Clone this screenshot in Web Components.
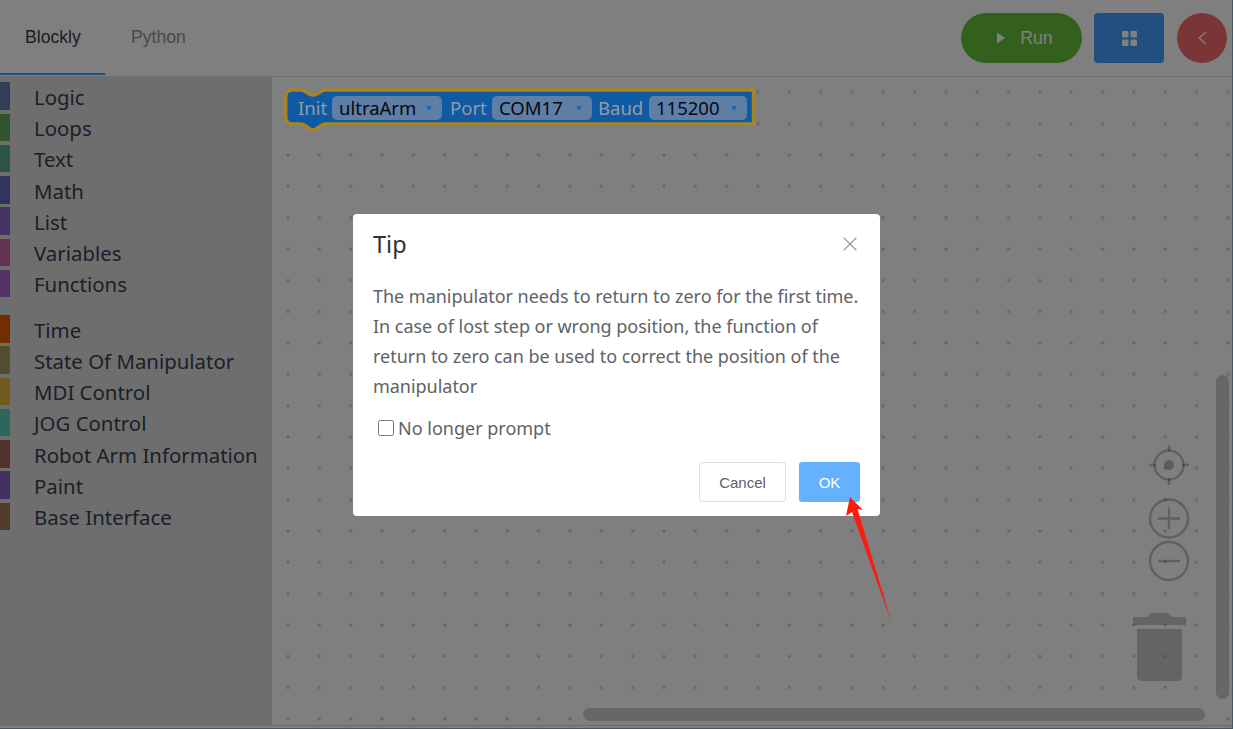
<!DOCTYPE html>
<html>
<head>
<meta charset="utf-8">
<title>Blockly</title>
<style>
  html, body { margin: 0; height: 100%; background: #fff; overflow: hidden; }
</style>
</head>
<body>
<app-shell></app-shell>

<script>
  const uiFont = '"Noto Sans", "Open Sans", sans-serif';
  const armFont = '"Liberation Sans", Arial, sans-serif';

  class ToolItem extends HTMLElement {
    connectedCallback() {
      if (this.shadowRoot) return;
      const shadow = this.attachShadow({ mode: 'open' });
      shadow.innerHTML = `
        <style>
          :host { display: flex; align-items: center; height: 31.25px; }
          .swatch { width: 10px; height: 27.5px; background: var(--c); }
          .label { margin-left: 24px; padding-top: 2px; font: 20.4px/1 ${uiFont}; color: #384050; white-space: nowrap; }
        </style>
        <div class="swatch"></div>
        <div class="label"><slot></slot></div>
      `;
      shadow.querySelector('.swatch').style.setProperty('--c', this.getAttribute('color'));
    }
  }

  class ToolBox extends HTMLElement {
    connectedCallback() {
      if (this.shadowRoot) return;
      const shadow = this.attachShadow({ mode: 'open' });
      const groups = [
        [['Logic', '#5f7fac'], ['Loops', '#5ea85e'], ['Text', '#56a886'], ['Math', '#6269bb'], ['List', '#8c64c7'], ['Variables', '#c764a6'], ['Functions', '#ac62c7']],
        [['Time', '#e65c00'], ['State Of Manipulator', '#a49b5d'], ['MDI Control', '#e0b63e'], ['JOG Control', '#58cfbc'], ['Robot Arm Information', '#a2645d'], ['Paint', '#8660c0'], ['Base Interface', '#9e7956']]
      ];
      shadow.innerHTML = `
        <style>
          :host { display: block; width: 272px; flex: none; background: #ddd; padding-top: 3.4px; box-sizing: border-box; }
          .group + .group { margin-top: 14px; }
        </style>
        ${groups.map((g) => `<div class="group">${g.map(([name, c]) => `<tool-item color="${c}">${name}</tool-item>`).join('')}</div>`).join('')}
      `;
    }
  }

  class AppHeader extends HTMLElement {
    connectedCallback() {
      if (this.shadowRoot) return;
      const shadow = this.attachShadow({ mode: 'open' });
      shadow.innerHTML = `
        <style>
          :host { display: flex; justify-content: space-between; height: 77px; box-sizing: border-box; border-bottom: 1px solid #e4e4e4; background: #fff; font: 17.6px ${armFont}; }
          .tabs { display: flex; }
          .tab { width: 105px; height: 75px; box-sizing: border-box; padding: 27px 0 0 25px; line-height: 20px; color: #909399; }
          .tab.on { color: #3a3b3e; border-bottom: 2px solid #409eff; }
          .tab + .tab { padding-left: 26px; }
          .actions { display: flex; gap: 12px; padding: 13px 6px 0 0; }
          .btn { height: 50px; display: flex; align-items: center; justify-content: center; color: #fff; box-sizing: border-box; }
          .run { width: 121px; border-radius: 25px; background: #67c23a; gap: 15px; padding-left: 7px; }
          .grid { width: 70px; border-radius: 4px; background: #409eff; margin-right: 1px; }
          .back { width: 50px; border-radius: 50%; background: #f56c6c; }
          svg { display: block; }
        </style>
        <div class="tabs">
          <div class="tab on">Blockly</div>
          <div class="tab">Python</div>
        </div>
        <div class="actions">
          <div class="btn run">
            <svg width="8" height="12" viewBox="0 0 8 12"><path d="M0 0.5 L8 6 L0 11.5Z" fill="#fff"/></svg>
            <span>Run</span>
          </div>
          <div class="btn grid">
            <svg width="15" height="15" viewBox="0 0 15 15" fill="#fff">
              <rect width="6.5" height="6.5" rx="1"/><rect x="8.5" width="6.5" height="6.5" rx="1"/>
              <rect y="8.5" width="6.5" height="6.5" rx="1"/><rect x="8.5" y="8.5" width="6.5" height="6.5" rx="1"/>
            </svg>
          </div>
          <div class="btn back">
            <svg width="9" height="14" viewBox="0 0 9 14"><path d="M8 0.7 L1.2 7 L8 13.3" fill="none" stroke="#fff" stroke-width="1.3"/></svg>
          </div>
        </div>
      `;
    }
  }

  class BlockField extends HTMLElement {
    connectedCallback() {
      if (this.shadowRoot) return;
      const shadow = this.attachShadow({ mode: 'open' });
      shadow.innerHTML = `
        <style>
          :host { display: flex; align-items: center; justify-content: space-between; box-sizing: border-box; height: 24px; padding: 0 10px 0 7px; border-radius: 5px; background: #5f7ea6; color: #06080f; width: var(--w); }
          i { width: 0; height: 0; border: 3.5px solid transparent; border-top: 5px solid #1f66ad; border-bottom: 0; }
        </style>
        <span><slot></slot></span><i></i>
      `;
    }
  }

  // sits above the mask: its colours are the dimmed ones already
  class InitBlock extends HTMLElement {
    connectedCallback() {
      if (this.shadowRoot) return;
      const shadow = this.attachShadow({ mode: 'open' });
      shadow.innerHTML = `
        <style>
          :host { position: absolute; z-index: 1; left: 12px; top: 9px; width: 474px; height: 46px; font: 18.5px/24px ${uiFont}; color: #949ba6; }
          svg { position: absolute; left: 0; top: 0; }
          .row { position: absolute; left: 14px; top: 10px; display: flex; align-items: center; white-space: nowrap; }
          .l1 { width: 34px; }
          .l2 { padding-left: 8px; box-sizing: border-box; width: 50px; }
          .l3 { width: 57px; padding-left: 6px; box-sizing: border-box; }
        </style>
        <svg width="474" height="46" viewBox="0 0 474 46">
          <path d="M8.5 4 H17 Q19 4 21 5.5 L26 8.5 Q29 9.5 32 8.5 L37 5.5 Q39 4 41 4 H469.5 V38 H41 Q39 38 37 39.5 L32 43 Q29 44.5 26 43 L21 39.5 Q19 38 17 38 H8.5 Q1.7 38 1.7 31 V11 Q1.7 4 8.5 4Z" fill="#0f5aa3" stroke="#a68524" stroke-width="3.4" stroke-linejoin="round"/>
        </svg>
        <div class="row">
          <span class="l1">Init</span>
          <block-field style="--w:110px">ultraArm</block-field>
          <span class="l2">Port</span>
          <block-field style="--w:100px">COM17</block-field>
          <span class="l3">Baud</span>
          <block-field style="--w:98px">115200</block-field>
        </div>
      `;
    }
  }

  class WorkspaceControls extends HTMLElement {
    connectedCallback() {
      if (this.shadowRoot) return;
      const shadow = this.attachShadow({ mode: 'open' });
      shadow.innerHTML = `
        <style>
          :host { position: absolute; left: 857px; top: 363px; }
          svg { display: block; }
        </style>
        <svg width="80" height="250" viewBox="845 440 80 250" fill="none" stroke="#2e2e2e" stroke-opacity=".3" stroke-width="2.4">
          <circle cx="885" cy="465" r="14.5"/>
          <path d="M885 445 v7 M885 478 v7 M865 465 h7 M898 465 h7"/>
          <circle cx="885" cy="465" r="5" fill="#1e1e1e" fill-opacity=".3" stroke="none"/>
          <circle cx="885" cy="518.5" r="19"/>
          <path d="M885 507.5 v22 M874 518.5 h22"/>
          <circle cx="885" cy="561" r="19"/>
          <path d="M874 561 h22"/>
          <path fill="#1e1e1e" fill-opacity=".24" stroke="none" d="M849 617 H863 Q866 613 869 613 H882 Q885 613 888 617 H902 V625 H849Z"/>
          <path fill="#1e1e1e" fill-opacity=".24" stroke="none" d="M853 629 H898 V676 Q898 681 893 681 H858 Q853 681 853 676Z"/>
        </svg>
      `;
    }
  }

  class BlockCanvas extends HTMLElement {
    connectedCallback() {
      if (this.shadowRoot) return;
      const shadow = this.attachShadow({ mode: 'open' });
      shadow.innerHTML = `
        <style>
          :host {
            display: block; position: relative; flex: 1; overflow: hidden; background-color: #fff;
            background-image: radial-gradient(circle at center, #cbcbcb 0, #cbcbcb 1.2px, transparent 1.9px);
            background-size: 31.33px 31.33px;
            background-position: 0.33px -0.3px;
          }
          .sb { position: absolute; background: #cfcfcf; border-radius: 7px; }
          .v { left: 944px; top: 298px; width: 13px; height: 324px; }
          .h { left: 311px; top: 631px; width: 622px; height: 13px; }
        </style>
        <init-block></init-block>
        <workspace-controls></workspace-controls>
        <div class="sb v"></div>
        <div class="sb h"></div>
      `;
    }
  }

  class TipDialog extends HTMLElement {
    connectedCallback() {
      if (this.shadowRoot) return;
      const shadow = this.attachShadow({ mode: 'open' });
      shadow.innerHTML = `
        <style>
          :host { display: block; width: 527px; height: 302px; box-sizing: border-box; background: #fff; border-radius: 4px; padding: 14px 20px; font-family: ${uiFont}; }
          .head { display: flex; justify-content: space-between; align-items: center; height: 32px; padding-right: 3px; }
          .title { font-size: 23.5px; color: #303133; }
          .body { margin-top: 21px; font-size: 18px; letter-spacing: -0.03px; line-height: 30px; color: #606266; white-space: nowrap; }
          .check { display: flex; align-items: center; margin: 12px 0 0 5px; height: 30px; font-size: 18px; color: #606266; }
          .box { width: 14px; height: 14px; border: 1px solid #767676; border-radius: 2.5px; margin-right: 4px; }
          .foot { display: flex; justify-content: flex-end; gap: 13px; margin-top: 19px; font: 15px ${armFont}; }
          .btn { height: 40px; box-sizing: border-box; border-radius: 3px; display: flex; align-items: center; justify-content: center; }
          .cancel { width: 87px; border: 1px solid #dcdfe6; color: #606266; }
          .ok { width: 61px; background: #66b1ff; color: #fff; }
          svg { display: block; }
        </style>
        <div class="head">
          <div class="title">Tip</div>
          <svg width="14" height="14" viewBox="0 0 14 14"><path d="M0.6 0.6 L13.4 13.4 M13.4 0.6 L0.6 13.4" stroke="#909399" stroke-width="1.3"/></svg>
        </div>
        <div class="body"><slot></slot></div>
        <div class="check"><span class="box"></span><span>No longer prompt</span></div>
        <div class="foot">
          <div class="btn cancel">Cancel</div>
          <div class="btn ok">OK</div>
        </div>
      `;
    }
  }

  class AppShell extends HTMLElement {
    connectedCallback() {
      if (this.shadowRoot) return;
      const shadow = this.attachShadow({ mode: 'open' });
      shadow.innerHTML = `
        <style>
          :host { display: flex; flex-direction: column; position: relative; width: 1233px; height: 729px; overflow: hidden; }
          .main { display: flex; height: 648px; border-bottom: 1px solid #d8d8d8; }
          .mask { position: absolute; inset: 0; background: rgba(0,0,0,.5); box-shadow: inset -1px -1px 0 #4a5660; display: flex; justify-content: center; padding-top: 214px; box-sizing: border-box; }
          .arrow { position: absolute; left: 0; top: 0; }
        </style>
        <app-header></app-header>
        <div class="main">
          <tool-box></tool-box>
          <block-canvas></block-canvas>
        </div>
        <div class="mask">
          <tip-dialog>The manipulator needs to return to zero for the first time.<br>In case of lost step or wrong position, the function of<br>return to zero can be used to correct the position of the<br>manipulator</tip-dialog>
        </div>
        <svg class="arrow" width="1233" height="729"><path d="M850 497 L863 510 L857.5 509 L892 624 L852 512 L846 516Z" fill="#ff1a10"/></svg>
      `;
    }
  }

  customElements.define('tool-item', ToolItem);
  customElements.define('tool-box', ToolBox);
  customElements.define('app-header', AppHeader);
  customElements.define('block-field', BlockField);
  customElements.define('init-block', InitBlock);
  customElements.define('workspace-controls', WorkspaceControls);
  customElements.define('block-canvas', BlockCanvas);
  customElements.define('tip-dialog', TipDialog);
  customElements.define('app-shell', AppShell);
</script>
</body>
</html>
